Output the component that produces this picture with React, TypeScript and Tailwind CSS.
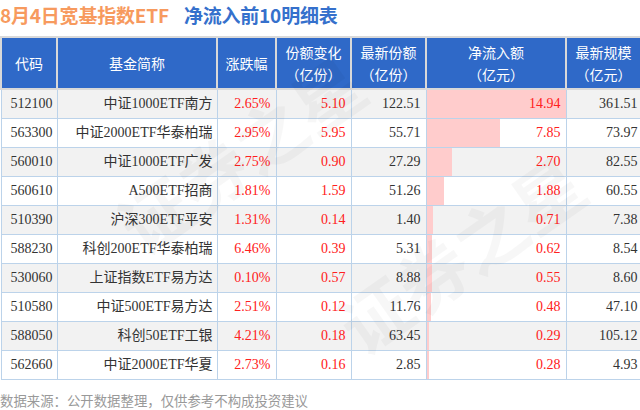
import React from "react";

type Row = {
  code: string;
  name: string;
  pct: string;
  chg: string;
  shares: string;
  inflow: number;
  scale: string;
};

const rows: Row[] = [
  { code: "512100", name: "中证1000ETF南方", pct: "2.65%", chg: "5.10", shares: "122.51", inflow: 14.94, scale: "361.51" },
  { code: "563300", name: "中证2000ETF华泰柏瑞", pct: "2.95%", chg: "5.95", shares: "55.71", inflow: 7.85, scale: "73.97" },
  { code: "560010", name: "中证1000ETF广发", pct: "2.75%", chg: "0.90", shares: "27.29", inflow: 2.7, scale: "82.55" },
  { code: "560610", name: "A500ETF招商", pct: "1.81%", chg: "1.59", shares: "51.26", inflow: 1.88, scale: "60.55" },
  { code: "510390", name: "沪深300ETF平安", pct: "1.31%", chg: "0.14", shares: "1.40", inflow: 0.71, scale: "7.38" },
  { code: "588230", name: "科创200ETF华泰柏瑞", pct: "6.46%", chg: "0.39", shares: "5.31", inflow: 0.62, scale: "8.54" },
  { code: "530060", name: "上证指数ETF易方达", pct: "0.10%", chg: "0.57", shares: "8.88", inflow: 0.55, scale: "8.60" },
  { code: "510580", name: "中证500ETF易方达", pct: "2.51%", chg: "0.12", shares: "11.76", inflow: 0.48, scale: "47.10" },
  { code: "588050", name: "科创50ETF工银", pct: "4.21%", chg: "0.18", shares: "63.45", inflow: 0.29, scale: "105.12" },
  { code: "562660", name: "中证2000ETF华夏", pct: "2.73%", chg: "0.16", shares: "2.85", inflow: 0.28, scale: "4.93" },
];

const maxInflow = 14.94;

const sans = "font-['Noto_Sans_CJK_SC','Noto_Sans',sans-serif]";
const serif = "font-['Liberation_Serif','Noto_Sans_CJK_SC',serif]";

function Head({ top, bottom }: { top: string; bottom?: string }) {
  return (
    <th className="border-2 border-[#d9d9d9] bg-[#2f69c8] p-0 text-center align-middle text-[14px] font-normal leading-[22px] text-white">
      <div>{top}</div>
      {bottom && <div>{bottom}</div>}
    </th>
  );
}

export default function App() {
  return (
    <div className={`relative h-[410px] w-[640px] overflow-hidden bg-white ${sans}`}>
      <h1 className="flex h-[36px] items-center gap-[15px] pb-[6px] text-[19px] font-bold tracking-[-0.2px]">
        <span className="text-[#f79a5e]">8月4日宽基指数ETF</span>
        <span className="text-[#3570cc]">净流入前10明细表</span>
      </h1>

      <table className="w-[640px] table-fixed border-collapse">
        <colgroup>
          <col className="w-[56px]" />
          <col className="w-[160px]" />
          <col className="w-[59px]" />
          <col className="w-[75px]" />
          <col className="w-[75px]" />
          <col className="w-[140px]" />
          <col className="w-[75px]" />
        </colgroup>
        <thead>
          <tr className="h-[52px]">
            <Head top="代码" />
            <Head top="基金简称" />
            <Head top="涨跌幅" />
            <Head top="份额变化" bottom="（亿份）" />
            <Head top="最新份额" bottom="（亿份）" />
            <Head top="净流入额" bottom="（亿元）" />
            <Head top="最新规模" bottom="（亿元）" />
          </tr>
        </thead>
        <tbody className={`${serif} text-[14px]`}>
          {rows.map((r, i) => (
            <tr key={r.code} className={`h-[29px] ${i % 2 === 0 ? "bg-[#f2f2f2]" : "bg-white"}`}>
              <td className="border border-[#bcd3ea] pl-[9px] text-left text-[#333]">{r.code}</td>
              <td className="border border-[#bcd3ea] pr-[4px] text-right text-[#333]">{r.name}</td>
              <td className="border border-[#bcd3ea] pr-[5px] text-right text-[#ff2020]">{r.pct}</td>
              <td className="border border-[#bcd3ea] pr-[5px] text-right text-[#ff2020]">{r.chg}</td>
              <td className="border border-[#bcd3ea] pr-[5px] text-right text-[#333]">{r.shares}</td>
              <td className="relative border border-[#bcd3ea] p-0 text-right text-[#ff2020]">
                <div
                  className="absolute inset-y-0 left-0 bg-[#ffcccc]"
                  style={{ width: `${(r.inflow / maxInflow) * 100}%` }}
                />
                <span className="relative pr-[5px]">{r.inflow.toFixed(2)}</span>
              </td>
              <td className="border border-[#bcd3ea] pr-[3px] text-right text-[#333]">{r.scale}</td>
            </tr>
          ))}
        </tbody>
      </table>

      <p className="pt-[11px] text-[13.4px] leading-[18px] text-[#999]">
        数据来源：公开数据整理，仅供参考不构成投资建议
      </p>

      {/* faint watermark */}
      <div
        aria-hidden="true"
        className="pointer-events-none absolute inset-0 select-none text-[70px] font-bold text-black/[0.03]"
      >
        <span className="absolute left-[100px] top-[100px] -rotate-[35deg] whitespace-nowrap">证券之星</span>
        <span className="absolute left-[320px] top-[200px] -rotate-[35deg] whitespace-nowrap">证券之星</span>
      </div>
    </div>
  );
}
